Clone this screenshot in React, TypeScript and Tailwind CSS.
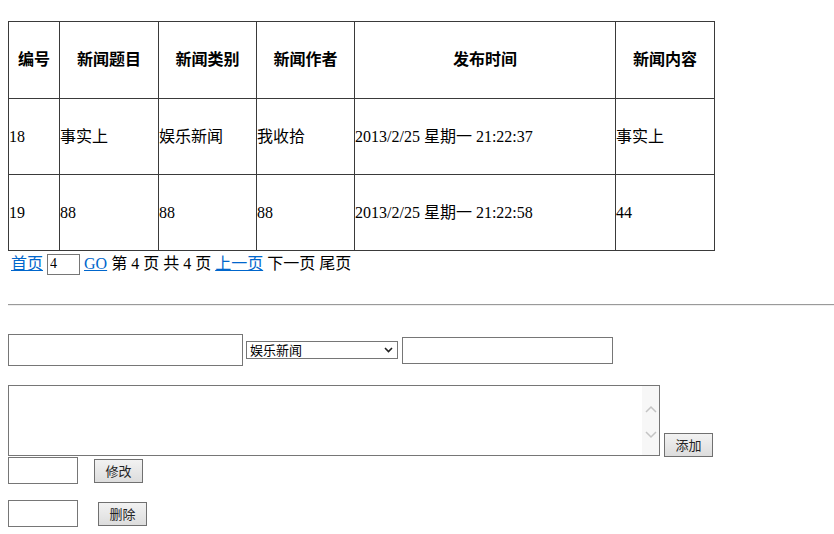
import React from 'react';

const font = "font-['Liberation_Serif','Noto_Sans_CJK_SC',serif]";
const uiFont = "font-['Noto_Sans_CJK_SC',sans-serif]";

const rows = [
  { id: '18', title: '事实上', type: '娱乐新闻', author: '我收拾', time: '2013/2/25 星期一 21:22:37', content: '事实上' },
  { id: '19', title: '88', type: '88', author: '88', time: '2013/2/25 星期一 21:22:58', content: '44' },
];

const heads = ['编号', '新闻题目', '新闻类别', '新闻作者', '发布时间', '新闻内容'];

const Btn: React.FC<{ label: string; className?: string }> = ({ label, className }) => (
  <button
    className={`h-[24px] w-[49px] border border-[#707070] bg-gradient-to-b from-[#f2f2f2] to-[#dddddd] text-[13px] text-[#222] ${uiFont} ${className ?? ''}`}
  >
    {label}
  </button>
);

export default function App() {
  return (
    <div className={`bg-white text-black text-[16px] ${font} pt-[21px] pl-[8px] w-[834px] h-[534px] overflow-hidden`}>
      <table className="table-fixed border-collapse w-[706px]">
        <colgroup>
          <col className="w-[51px]" />
          <col className="w-[99px]" />
          <col className="w-[98px]" />
          <col className="w-[98px]" />
          <col className="w-[261px]" />
          <col className="w-[99px]" />
        </colgroup>
        <thead>
          <tr className="h-[77px]">
            {heads.map((h) => (
              <th key={h} className={`border border-[#3a3a3a] p-0 pb-[4px] text-center font-bold text-[16px] ${uiFont}`}>
                {h}
              </th>
            ))}
          </tr>
        </thead>
        <tbody>
          {rows.map((r) => (
            <tr key={r.id} className="h-[76px]">
              {[r.id, r.title, r.type, r.author, r.time, r.content].map((c, i) => (
                <td key={i} className="border border-[#3a3a3a] p-0 text-left align-middle whitespace-nowrap">
                  {c}
                </td>
              ))}
            </tr>
          ))}
        </tbody>
      </table>

      <div className="flex items-center h-[26px] pl-[3px] leading-none whitespace-pre">
        <a href="#" className="text-[#0066cc] underline">首页</a>
        <span> </span>
        <input
          defaultValue="4"
          className={`w-[33px] h-[21px] border border-[#767676] px-[2px] text-[14px] ${font} outline-none`}
        />
        <span> </span>
        <a href="#" className="text-[#0066cc] underline">GO</a>
        <span> 第 4 页 共 4 页 </span>
        <a href="#" className="text-[#0066cc] underline">上一页</a>
        <span> 下一页 尾页</span>
      </div>

      <div className="mt-[27px] h-[2px] w-[826px] border-t border-[#9a9a9a] border-b border-b-[#eeeeee]" />

      <div className="mt-[28px] flex items-center h-[32px]">
        <input className="w-[235px] h-[32px] border border-[#767676] outline-none" />
        <div className={`ml-[3px] w-[152px] h-[18px] border border-[#767676] flex items-center justify-between pl-[3px] pr-[4px] text-[13px] ${uiFont}`}>
          <span>娱乐新闻</span>
          <svg width="9" height="6" viewBox="0 0 9 6" fill="none">
            <path d="M1 1l3.5 3.5L8 1" stroke="#222" strokeWidth="1.6" />
          </svg>
        </div>
        <input className="ml-[4px] w-[211px] h-[27px] border border-[#767676] outline-none" />
      </div>

      <div className="mt-[19px] flex items-end">
        <div className="relative w-[652px] h-[71px]">
          <textarea className="block w-full h-full border border-[#767676] resize-none outline-none" />
          <div className="absolute right-[1px] top-[1px] bottom-[1px] w-[17px] bg-[#f7f7f7] flex flex-col items-center justify-center gap-[18px] pt-[2px]">
            <svg width="12" height="8" viewBox="0 0 12 8" fill="none">
              <path d="M1 7l5-5 5 5" stroke="#c4c4c4" strokeWidth="1.5" />
            </svg>
            <svg width="12" height="8" viewBox="0 0 12 8" fill="none">
              <path d="M1 1l5 5 5-5" stroke="#c4c4c4" strokeWidth="1.5" />
            </svg>
          </div>
        </div>
        <Btn label="添加" className="ml-[4px] mb-[-1px]" />
      </div>

      <div className="mt-[1px] flex items-center">
        <input className="w-[70px] h-[27px] border border-[#767676] outline-none" />
        <Btn label="修改" className="ml-[16px] h-[23px]" />
      </div>

      <div className="mt-[16px] flex items-center">
        <input className="w-[70px] h-[27px] border border-[#767676] outline-none" />
        <Btn label="删除" className="ml-[20px] h-[23px]" />
      </div>
    </div>
  );
}
